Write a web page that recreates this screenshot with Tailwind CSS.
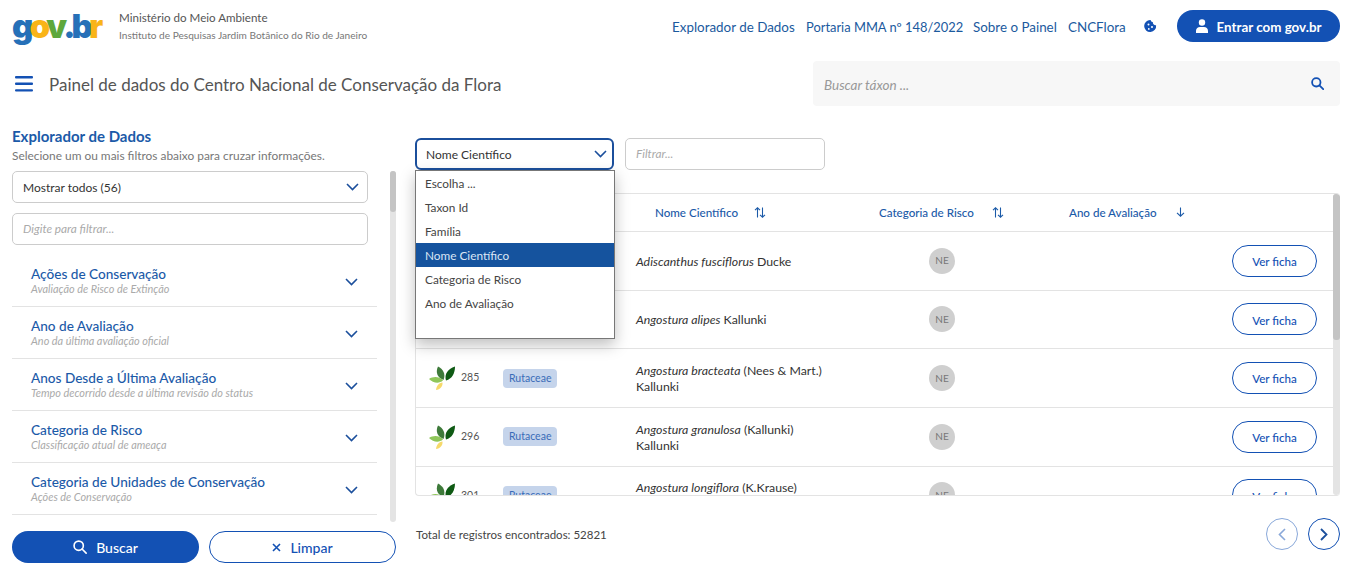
<!DOCTYPE html>
<html lang="pt-BR">
<head>
    <meta charset="UTF-8">
    <meta name="viewport" content="width=device-width, initial-scale=1.0">
    <title>Painel de dados CNCFlora</title>
    <script src="https://cdn.jsdelivr.net/npm/@tailwindcss/browser@4"></script>
</head>
<body class="h-[570px] overflow-hidden bg-white font-['Lato',sans-serif] text-[#333]">
<header class="flex items-center h-[32px] mt-[10px] pl-[12px] pr-[9px]">
    <div class="w-[88px] h-[32px] flex items-center font-['Inter',sans-serif] font-black text-[33px] tracking-[-3.900px] leading-none whitespace-nowrap">
        <span class="text-[#2670b8]">g</span><span class="text-[#f9b418]">o</span><span class="text-[#5ea83c]">v</span><span class="text-[#2670b8]">.b</span><span class="text-[#f9b418]">r</span>
    </div>
    <div class="ml-[19px] leading-none">
        <p class="text-[11.600px] text-[#555]">Ministério do Meio Ambiente</p>
        <p class="text-[10.100px] text-[#777] mt-[6px]">Instituto de Pesquisas Jardim Botânico do Rio de Janeiro</p>
    </div>
    <nav class="ml-auto flex items-center text-[13.400px] text-[#1b5a9e] whitespace-nowrap">
        <a class="w-[134px] pt-[2px]">Explorador de Dados</a>
        <a class="w-[167px] pt-[3px] text-[12.900px]">Portaria MMA nº 148/2022</a>
        <a class="w-[95px] pt-[2px]">Sobre o Painel</a>
        <a class="w-[76px] pt-[2px]">CNCFlora</a>
        <svg class="w-[14px] h-[14px] mr-[19px]" viewBox="0 0 14 14"><path fill="#1351b4" fill-rule="evenodd" d="M6.500 1a3 3 0 0 0 2.400 2.300 2.600 2.600 0 0 0 3.200 2.900A6 6 0 1 1 6.500 1zM4.500 4.600a1 1 0 1 0 0 2 1 1 0 0 0 0-2zM8 7a1 1 0 1 0 0 2 1 1 0 0 0 0-2zM4.800 9a.9.9 0 1 0 0 1.800.9.9 0 0 0 0-1.800z"/></svg>
        <button class="w-[163px] h-[32px] rounded-full bg-[#1351b4] text-white text-[13.400px] font-bold flex items-center justify-center gap-[9px]">
            <svg class="w-[12px] h-[14px]" viewBox="0 0 12 14" fill="white"><circle cx="6" cy="3.500" r="3.200"/><path d="M0 14v-2.200C0 9.600 1.800 8 4 8h4c2.200 0 4 1.600 4 3.800V14z"/></svg>
            <span class="pt-[2px]">Entrar com gov.br</span>
        </button>
    </nav>
</header>

<div class="flex items-center mt-[19px] h-[45px] pl-[15px] pr-[9px]">
    <svg class="w-[18px] h-[16px]" viewBox="0 0 18 16" fill="#1351b4"><rect width="18" height="2.400" rx="1"/><rect y="6.600" width="18" height="2.400" rx="1"/><rect y="13.200" width="18" height="2.400" rx="1"/></svg>
    <h2 class="ml-[16px] pt-[2px] text-[17px] text-[#555] whitespace-nowrap">Painel de dados do Centro Nacional de Conservação da Flora</h2>
    <div class="ml-auto w-[527px] h-[45px] bg-[#f7f7f7] rounded-[4px] flex items-center justify-between pl-[11px] pr-[16px]">
        <span class="pt-[4px] text-[13.500px] italic text-[#999]">Buscar táxon ...</span>
        <svg class="w-[13px] h-[13px]" viewBox="0 0 13 13" fill="none" stroke="#1351b4" stroke-width="1.800"><circle cx="5.300" cy="5.300" r="4.200"/><path d="M8.400 8.400 12.200 12.200" stroke-linecap="round"/></svg>
    </div>
</div>

<main class="flex pl-[12px] pr-[9px] mt-[23px] gap-[19px]">
    <aside class="w-[384px] shrink-0">
        <h3 class="text-[15px] leading-[14px] font-bold text-[#1b5aa8]">Explorador de Dados</h3>
        <p class="text-[11.900px] leading-[12px] mt-[7px] text-[#777]">Selecione um ou mais filtros abaixo para cruzar informações.</p>
        <div class="flex justify-between h-[352px] mt-[8px] pt-[1px]">
            <div class="w-[365px] overflow-hidden">
                <div class="w-[356px] h-[32px] border border-[#ccc] rounded-[5px] flex items-center justify-between pl-[10px] pr-[8px] text-[12px] text-[#333]">
                    <span class="pt-[2px]">Mostrar todos (56)</span>
                    <svg class="w-[13px] h-[8px]" viewBox="0 0 13 8" fill="none" stroke="#1b4f9c" stroke-width="1.600"><path d="M1 1l5.500 5.500L12 1"/></svg>
                </div>
                <div class="w-[356px] h-[32px] mt-[10px] border border-[#ccc] rounded-[5px] flex items-center pl-[10px] text-[11.800px] italic text-[#aaa]">Digite para filtrar...</div>
                <div class="mt-[10px]">
                    <div class="h-[52px] pl-[19px] pr-[19px] border-b border-[#e3e3e3] flex items-center justify-between">
                        <div><p class="text-[13.600px] leading-[17px] font-medium text-[#1b5aa8]">Ações de Conservação</p><p class="text-[10.900px] leading-[12px] italic text-[#aaa]">Avaliação de Risco de Extinção</p></div>
                        <svg class="w-[13px] h-[8px] mt-[2px]" viewBox="0 0 13 8" fill="none" stroke="#1b4f9c" stroke-width="1.600"><path d="M1 1l5.500 5.500L12 1"/></svg>
                    </div>
                    <div class="h-[52px] pl-[19px] pr-[19px] border-b border-[#e3e3e3] flex items-center justify-between">
                        <div><p class="text-[13.600px] leading-[17px] font-medium text-[#1b5aa8]">Ano de Avaliação</p><p class="text-[10.900px] leading-[12px] italic text-[#aaa]">Ano da última avaliação oficial</p></div>
                        <svg class="w-[13px] h-[8px] mt-[2px]" viewBox="0 0 13 8" fill="none" stroke="#1b4f9c" stroke-width="1.600"><path d="M1 1l5.500 5.500L12 1"/></svg>
                    </div>
                    <div class="h-[52px] pl-[19px] pr-[19px] border-b border-[#e3e3e3] flex items-center justify-between">
                        <div><p class="text-[13.600px] leading-[17px] font-medium text-[#1b5aa8]">Anos Desde a Última Avaliação</p><p class="text-[10.900px] leading-[12px] italic text-[#aaa]">Tempo decorrido desde a última revisão do status</p></div>
                        <svg class="w-[13px] h-[8px] mt-[2px]" viewBox="0 0 13 8" fill="none" stroke="#1b4f9c" stroke-width="1.600"><path d="M1 1l5.500 5.500L12 1"/></svg>
                    </div>
                    <div class="h-[52px] pl-[19px] pr-[19px] border-b border-[#e3e3e3] flex items-center justify-between">
                        <div><p class="text-[13.600px] leading-[17px] font-medium text-[#1b5aa8]">Categoria de Risco</p><p class="text-[10.900px] leading-[12px] italic text-[#aaa]">Classificação atual de ameaça</p></div>
                        <svg class="w-[13px] h-[8px] mt-[2px]" viewBox="0 0 13 8" fill="none" stroke="#1b4f9c" stroke-width="1.600"><path d="M1 1l5.500 5.500L12 1"/></svg>
                    </div>
                    <div class="h-[52px] pl-[19px] pr-[19px] border-b border-[#e3e3e3] flex items-center justify-between">
                        <div><p class="text-[13.600px] leading-[17px] font-medium text-[#1b5aa8]">Categoria de Unidades de Conservação</p><p class="text-[10.900px] leading-[12px] italic text-[#aaa]">Ações de Conservação</p></div>
                        <svg class="w-[13px] h-[8px] mt-[2px]" viewBox="0 0 13 8" fill="none" stroke="#1b4f9c" stroke-width="1.600"><path d="M1 1l5.500 5.500L12 1"/></svg>
                    </div>
                </div>
            </div>
            <div class="w-[6px] bg-[#e4e4e4] rounded-[3px]"><div class="h-[41px] bg-[#c4c4c4] rounded-[3px]"></div></div>
        </div>
        <div class="flex gap-[10px] mt-[9px]">
            <button class="w-[187px] h-[32px] rounded-full bg-[#1351b4] text-white text-[14px] font-medium flex items-center justify-center gap-[9px]">
                <svg class="w-[14px] h-[14px]" viewBox="0 0 13 13" fill="none" stroke="white" stroke-width="1.500"><circle cx="5.300" cy="5.300" r="4.300"/><path d="M8.400 8.400 12.200 12.200" stroke-linecap="round"/></svg>
                Buscar
            </button>
            <button class="w-[187px] h-[32px] rounded-full border border-[#1351b4] text-[#1351b4] text-[14px] font-medium flex items-center justify-center gap-[9px]">
                <svg class="w-[9px] h-[9px]" viewBox="0 0 9 9" fill="none" stroke="#1351b4" stroke-width="1.600"><path d="M1 1l7 7M8 1l-7 7"/></svg>
                Limpar
            </button>
        </div>
    </aside>

    <section class="relative flex-1 pt-[9px]">
        <div class="flex gap-[11px]">
            <div class="w-[199px] h-[32px] border-2 border-[#1b4f9c] rounded-[6px] flex items-center justify-between pl-[9px] pr-[5px] text-[12px]">
                <span class="pt-[2px]">Nome Científico</span>
                <svg class="w-[13px] h-[8px]" viewBox="0 0 13 8" fill="none" stroke="#1b4f9c" stroke-width="1.600"><path d="M1 1l5.500 5.500L12 1"/></svg>
            </div>
            <div class="w-[200px] h-[32px] border border-[#ccc] rounded-[5px] flex items-center pl-[10px] text-[11.800px] italic text-[#aaa]">Filtrar...</div>
        </div>

        <div class="flex mt-[23px] h-[303px] border-t border-b border-l border-[#e3e3e3] rounded-[4px] overflow-hidden">
            <div class="flex-1 overflow-hidden">
                <div class="grid grid-cols-[87px_133px_194px_224px_1fr] items-center h-[38px] border-b border-[#e3e3e3] text-[11.600px] font-medium text-[#1b5aa8]">
                    <div></div>
                    <div></div>
                    <div class="flex items-center pl-[19px] gap-[16px]">Nome Científico
                        <svg class="w-[12px] h-[11px]" viewBox="0 0 12 11" fill="none" stroke="#1b5aa8" stroke-width="1.100"><path d="M3.500 10.500V.8M1 3.200 3.500.8 6 3.200M8.500.5v9.700M6 7.800l2.500 2.400L11 7.800"/></svg>
                    </div>
                    <div class="flex items-center pl-[49px] gap-[18px]">Categoria de Risco
                        <svg class="w-[12px] h-[11px]" viewBox="0 0 12 11" fill="none" stroke="#1b5aa8" stroke-width="1.100"><path d="M3.500 10.500V.8M1 3.200 3.500.8 6 3.200M8.500.5v9.700M6 7.800l2.500 2.400L11 7.800"/></svg>
                    </div>
                    <div class="flex items-center pl-[15px] gap-[19px]">Ano de Avaliação
                        <svg class="w-[9px] h-[10px]" viewBox="0 0 9 10" fill="none" stroke="#1b5aa8" stroke-width="1.100"><path d="M4.500.5v8.700M1 5.800l3.500 3.400L8 5.800"/></svg>
                    </div>
                </div>

                <div class="grid grid-cols-[87px_133px_194px_224px_1fr] items-center h-[58.670px] border-b border-[#e3e3e3] text-[12.300px]">
                    <div class="flex items-center pl-[13px] gap-[6px]"><svg class="w-[26px] h-[24px]" viewBox="0 0 26 24"><path fill="#3e7a3a" d="M14.500 14C9 12 6 7 9 .5 14 3 17 8 14.500 14z"/><path fill="#0f5a14" d="M17 14.500C15 8 19 3 26 .5 26 7 23 13 17 14.500z"/><path fill="#8fc65a" d="M14 14.500C10 10 4 10.500 0 13 4 17 10 18 14 14.500z"/><path fill="#f6d96b" d="M13.500 16.500C9.500 17 7.500 20 7 24 11 23.500 14 20.500 13.500 16.500z"/></svg><span class="text-[10.500px] text-[#555]">113</span></div>
                    <div><span class="inline-block px-[6px] h-[19px] leading-[19px] rounded-[4px] bg-[#c5d4eb] text-[#3a6cb8] text-[10.500px]">Rutaceae</span></div>
                    <div class="pt-[2px]"><i>Adiscanthus fusciflorus</i> Ducke</div>
                    <div class="flex justify-center"><span class="w-[26px] h-[26px] rounded-full bg-[#cfcfcf] text-[#777] text-[10px] flex items-center justify-center">NE</span></div>
                    <div class="flex justify-end pr-[16px]"><button class="w-[85px] h-[32px] pt-[2px] rounded-full border border-[#1351b4] text-[#1351b4] text-[11.600px] font-medium">Ver ficha</button></div>
                </div>
                <div class="grid grid-cols-[87px_133px_194px_224px_1fr] items-center h-[58.670px] border-b border-[#e3e3e3] text-[12.300px]">
                    <div class="flex items-center pl-[13px] gap-[6px]"><svg class="w-[26px] h-[24px]" viewBox="0 0 26 24"><path fill="#3e7a3a" d="M14.500 14C9 12 6 7 9 .5 14 3 17 8 14.500 14z"/><path fill="#0f5a14" d="M17 14.500C15 8 19 3 26 .5 26 7 23 13 17 14.500z"/><path fill="#8fc65a" d="M14 14.500C10 10 4 10.500 0 13 4 17 10 18 14 14.500z"/><path fill="#f6d96b" d="M13.500 16.500C9.500 17 7.500 20 7 24 11 23.500 14 20.500 13.500 16.500z"/></svg><span class="text-[10.500px] text-[#555]">281</span></div>
                    <div><span class="inline-block px-[6px] h-[19px] leading-[19px] rounded-[4px] bg-[#c5d4eb] text-[#3a6cb8] text-[10.500px]">Rutaceae</span></div>
                    <div class="pt-[2px]"><i>Angostura alipes</i> Kallunki</div>
                    <div class="flex justify-center"><span class="w-[26px] h-[26px] rounded-full bg-[#cfcfcf] text-[#777] text-[10px] flex items-center justify-center">NE</span></div>
                    <div class="flex justify-end pr-[16px]"><button class="w-[85px] h-[32px] pt-[2px] rounded-full border border-[#1351b4] text-[#1351b4] text-[11.600px] font-medium">Ver ficha</button></div>
                </div>
                <div class="grid grid-cols-[87px_133px_194px_224px_1fr] items-center h-[58.670px] border-b border-[#e3e3e3] text-[12.300px]">
                    <div class="flex items-center pl-[13px] gap-[6px]"><svg class="w-[26px] h-[24px]" viewBox="0 0 26 24"><path fill="#3e7a3a" d="M14.500 14C9 12 6 7 9 .5 14 3 17 8 14.500 14z"/><path fill="#0f5a14" d="M17 14.500C15 8 19 3 26 .5 26 7 23 13 17 14.500z"/><path fill="#8fc65a" d="M14 14.500C10 10 4 10.500 0 13 4 17 10 18 14 14.500z"/><path fill="#f6d96b" d="M13.500 16.500C9.500 17 7.500 20 7 24 11 23.500 14 20.500 13.500 16.500z"/></svg><span class="text-[10.500px] text-[#555]">285</span></div>
                    <div><span class="inline-block px-[6px] h-[19px] leading-[19px] rounded-[4px] bg-[#c5d4eb] text-[#3a6cb8] text-[10.500px]">Rutaceae</span></div>
                    <div class="leading-[16px] pt-[2px]"><i>Angostura bracteata</i> (Nees &amp; Mart.) Kallunki</div>
                    <div class="flex justify-center"><span class="w-[26px] h-[26px] rounded-full bg-[#cfcfcf] text-[#777] text-[10px] flex items-center justify-center">NE</span></div>
                    <div class="flex justify-end pr-[16px]"><button class="w-[85px] h-[32px] pt-[2px] rounded-full border border-[#1351b4] text-[#1351b4] text-[11.600px] font-medium">Ver ficha</button></div>
                </div>
                <div class="grid grid-cols-[87px_133px_194px_224px_1fr] items-center h-[58.670px] border-b border-[#e3e3e3] text-[12.300px]">
                    <div class="flex items-center pl-[13px] gap-[6px]"><svg class="w-[26px] h-[24px]" viewBox="0 0 26 24"><path fill="#3e7a3a" d="M14.500 14C9 12 6 7 9 .5 14 3 17 8 14.500 14z"/><path fill="#0f5a14" d="M17 14.500C15 8 19 3 26 .5 26 7 23 13 17 14.500z"/><path fill="#8fc65a" d="M14 14.500C10 10 4 10.500 0 13 4 17 10 18 14 14.500z"/><path fill="#f6d96b" d="M13.500 16.500C9.500 17 7.500 20 7 24 11 23.500 14 20.500 13.500 16.500z"/></svg><span class="text-[10.500px] text-[#555]">296</span></div>
                    <div><span class="inline-block px-[6px] h-[19px] leading-[19px] rounded-[4px] bg-[#c5d4eb] text-[#3a6cb8] text-[10.500px]">Rutaceae</span></div>
                    <div class="leading-[16px] pt-[2px]"><i>Angostura granulosa</i> (Kallunki) Kallunki</div>
                    <div class="flex justify-center"><span class="w-[26px] h-[26px] rounded-full bg-[#cfcfcf] text-[#777] text-[10px] flex items-center justify-center">NE</span></div>
                    <div class="flex justify-end pr-[16px]"><button class="w-[85px] h-[32px] pt-[2px] rounded-full border border-[#1351b4] text-[#1351b4] text-[11.600px] font-medium">Ver ficha</button></div>
                </div>
                <div class="grid grid-cols-[87px_133px_194px_224px_1fr] items-center h-[58.670px] border-b border-[#e3e3e3] text-[12.300px]">
                    <div class="flex items-center pl-[13px] gap-[6px]"><svg class="w-[26px] h-[24px]" viewBox="0 0 26 24"><path fill="#3e7a3a" d="M14.500 14C9 12 6 7 9 .5 14 3 17 8 14.500 14z"/><path fill="#0f5a14" d="M17 14.500C15 8 19 3 26 .5 26 7 23 13 17 14.500z"/><path fill="#8fc65a" d="M14 14.500C10 10 4 10.500 0 13 4 17 10 18 14 14.500z"/><path fill="#f6d96b" d="M13.500 16.500C9.500 17 7.500 20 7 24 11 23.500 14 20.500 13.500 16.500z"/></svg><span class="text-[10.500px] text-[#555]">301</span></div>
                    <div><span class="inline-block px-[6px] h-[19px] leading-[19px] rounded-[4px] bg-[#c5d4eb] text-[#3a6cb8] text-[10.500px]">Rutaceae</span></div>
                    <div class="leading-[16px] pt-[2px]"><i>Angostura longiflora</i> (K.Krause) Kallunki</div>
                    <div class="flex justify-center"><span class="w-[26px] h-[26px] rounded-full bg-[#cfcfcf] text-[#777] text-[10px] flex items-center justify-center">NE</span></div>
                    <div class="flex justify-end pr-[16px]"><button class="w-[85px] h-[32px] pt-[2px] rounded-full border border-[#1351b4] text-[#1351b4] text-[11.600px] font-medium">Ver ficha</button></div>
                </div>
            </div>
            <div class="w-[7px] bg-[#e4e4e4] rounded-[3px]"><div class="h-[146px] bg-[#c4c4c4] rounded-[3px]"></div></div>
        </div>

        <div class="flex items-center justify-between mt-[22px]">
            <p class="pl-[1px] pt-[2px] text-[11.500px] text-[#444]">Total de registros encontrados: 52821</p>
            <div class="flex gap-[10px]">
                <span class="w-[32px] h-[32px] rounded-full border border-[#1351b4]/50 flex items-center justify-center"><svg class="w-[8px] h-[13px]" viewBox="0 0 8 13" fill="none" stroke="#1351b4" stroke-opacity=".5" stroke-width="1.600"><path d="M7 1 1.500 6.500 7 12"/></svg></span>
                <span class="w-[32px] h-[32px] rounded-full border border-[#1351b4] flex items-center justify-center"><svg class="w-[8px] h-[13px]" viewBox="0 0 8 13" fill="none" stroke="#1b4f9c" stroke-width="1.800"><path d="M1 1l5.500 5.500L1 12"/></svg></span>
            </div>
        </div>

        <ul class="absolute left-0 top-[41px] w-[200px] h-[169px] bg-white border border-[#777] shadow-[0_6px_14px_rgba(0,0,0,0.25)] text-[11.800px] text-[#444]">
            <li class="h-[24px] leading-[25px] pl-[9px]">Escolha ...</li>
            <li class="h-[24px] leading-[25px] pl-[9px]">Taxon Id</li>
            <li class="h-[24px] leading-[25px] pl-[9px]">Família</li>
            <li class="h-[24px] leading-[25px] pl-[9px] bg-[#15539e] text-[#dbe6f5]">Nome Científico</li>
            <li class="h-[24px] leading-[25px] pl-[9px]">Categoria de Risco</li>
            <li class="h-[24px] leading-[25px] pl-[9px]">Ano de Avaliação</li>
        </ul>
    </section>
</main>
</body>
</html>
